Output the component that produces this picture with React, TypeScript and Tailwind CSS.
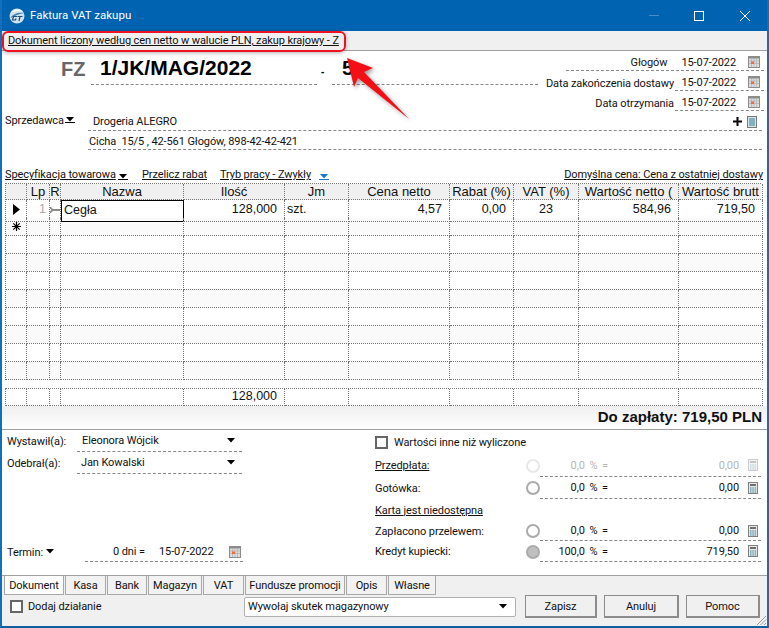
import { ReactNode } from "react";

const COLS = [21, 23, 11, 123, 101, 64, 101, 64, 65, 100, 84];
const HEADERS = ["", "Lp", "R", "Nazwa", "Ilość", "Jm", "Cena netto", "Rabat (%)", "VAT (%)", "Wartość netto (", "Wartość brutt"];
const EMPTY_ROWS = [1, 2, 3, 4, 5, 6, 7, 8, 9];

const tahoma = "whitespace-nowrap font-['Roboto',sans-serif] text-[11px] leading-none tracking-[-0.1px] text-[#111]";
const gridCols = "grid grid-cols-[21px_23px_11px_123px_101px_64px_101px_64px_65px_100px_84px]";

function DownArrow({ color = "#000", line = false }: { color?: string; line?: boolean }) {
  return (
    <svg width="10" height="6" viewBox="0 0 10 6" className="shrink-0">
      <path d="M1 0h8L5 4.500z" fill={color} />
      {line && <path d="M0 5.500h10" stroke={color} />}
    </svg>
  );
}

function CalendarIcon({ className = "" }: { className?: string }) {
  return (
    <svg width="12" height="12" viewBox="0 0 12 12" className={`shrink-0 ${className}`}>
      <rect width="12" height="12" fill="#8c8c8c" />
      <rect x="1" y="2.500" width="10" height="8.500" fill="#dcdcdc" />
      <path d="M1 5h10M1 7.500h10M3.500 2.500v8.500M6 2.500v8.500M8.500 2.500v8.500" stroke="#b4b4b4" strokeWidth="0.8" />
      <rect x="3" y="5.500" width="3" height="2.500" fill="#e8703a" />
    </svg>
  );
}

function CalcIcon({ faded = false }: { faded?: boolean }) {
  return (
    <svg width="10" height="12" viewBox="0 0 10 12" className={`shrink-0 ${faded ? "opacity-40" : ""}`}>
      <rect x="0.5" y="0.5" width="9" height="11" fill="#e8e8e8" stroke="#808080" />
      <rect x="2" y="2" width="6" height="2" fill="#6e6e6e" />
      <path d="M2 6h1.500M4.300 6h1.500M6.600 6h1.500M2 8h1.500M4.300 8h1.500M6.600 8h1.500M2 10h1.500M4.300 10h1.500M6.600 10h1.500" stroke="#2f7f97" />
    </svg>
  );
}

function Radio({ filled = false, faded = false }: { filled?: boolean; faded?: boolean }) {
  return (
    <span
      className={`h-[14px] w-[14px] shrink-0 rounded-full border-2 ${
        faded ? "border-[#e8e8e8]" : "border-[#ababab]"
      } ${filled ? "bg-[#c0c0c0]" : "bg-white"}`}
    />
  );
}

function Checkbox() {
  return <span className="h-[13px] w-[13px] shrink-0 border-2 border-[#666] bg-white" />;
}

function DateRow({ label, inside = false }: { label: string; inside?: boolean }) {
  if (inside) {
    return (
      <div className="flex h-[20px] justify-end">
        <div className="flex h-[20px] w-[198px] items-end justify-end border-b border-dashed border-[#888] pb-[2px] pr-[4px]">
          <span className={`${tahoma} mr-[14px]`}>{label}</span>
          <span className={`${tahoma} mr-[12px]`}>15-07-2022</span>
          <CalendarIcon />
        </div>
      </div>
    );
  }
  return (
    <div className="flex h-[20px] justify-end">
      <span className={`${tahoma} mr-[1px] mt-[7px]`}>{label}</span>
      <div className="flex h-[20px] w-[89px] items-end justify-end border-b border-dashed border-[#888] pb-[2px] pr-[4px]">
        <span className={`${tahoma} mr-[12px]`}>15-07-2022</span>
        <CalendarIcon />
      </div>
    </div>
  );
}

function Cell({ children, align = "left", header = false }: { children?: ReactNode; align?: string; header?: boolean }) {
  return (
    <div
      className={`flex overflow-hidden whitespace-nowrap border-r border-b border-dotted border-[#777] font-['Liberation_Sans',sans-serif] text-[#111] ${
        header ? "items-center text-[13px]" : "items-center pb-[2px] text-[12.5px]"
      } ${align === "right" ? "justify-end pr-[7px]" : align === "center" ? "justify-center" : "pl-[2px]"}`}
    >
      {children}
    </div>
  );
}

function PayRow({
  label,
  pct,
  amount,
  h,
  faded = false,
  filled = false,
  underline = false,
}: {
  label: string;
  pct: string;
  amount: string;
  h: string;
  faded?: boolean;
  filled?: boolean;
  underline?: boolean;
}) {
  const color = faded ? "text-[#b5b5b5]" : "";
  return (
    <div className={`flex items-center ${h}`}>
      <span className={`${tahoma} w-[151px] ${underline ? "underline" : ""}`}>{label}</span>
      <Radio filled={filled} faded={faded} />
      <div className="flex h-full w-[221px] items-center border-b border-dashed border-[#888] pl-[1px] pr-[3px]">
        <span className={`${tahoma} ${color} w-[67px] text-right [word-spacing:2px]`}>{pct}</span>
        <span className={`${tahoma} ${color} flex-1 text-right`}>{amount}</span>
        <span className="ml-[9px]">
          <CalcIcon faded={faded} />
        </span>
      </div>
    </div>
  );
}

function Tab({ label, w, active = false }: { label: string; w: string; active?: boolean }) {
  return (
    <div
      className={`flex h-[19px] items-center justify-center border border-t-0 border-[#a8a8a8] ${tahoma} ${w} ${
        active ? "bg-white" : "bg-[#f2f2f2]"
      }`}
    >
      {label}
    </div>
  );
}

function Button({ label, w }: { label: string; w: string }) {
  return (
    <button
      className={`${tahoma} flex h-[23px] ${w} items-center justify-center border border-[#8c8c8c] border-b-2 border-r-2 bg-[#f0f0f0]`}
    >
      {label}
    </button>
  );
}

export default function App() {
  return (
    <div className="relative flex h-[628px] w-[769px] flex-col overflow-hidden border-x-2 border-b-2 border-x-[#1070bd] border-b-[#0f5f9f] bg-white">
      {/* title bar */}
      <div className="-mx-[2px] flex h-[31px] shrink-0 items-center bg-[#0063b1] pl-[9px]">
        <svg width="16" height="16" viewBox="0 0 16 16" className="shrink-0">
          <circle cx="8" cy="8" r="7.500" fill="#cfe2ef" />
          <path d="M2 4.500C5 1 11 .500 14 4c-4-1.500-8-1-12 .500z" fill="#fff" />
          <path d="M1 10c3-4 8-6 14-5-4 .500-10 3-14 5z" fill="#3f7fae" />
          <path d="M8 8.500H4.500L3.500 12h3l.500-1.500M8.500 8.500h5M11 8.500l-1 4.500" stroke="#1d4d74" strokeWidth="1.2" fill="none" />
        </svg>
        <span className="ml-[5px] font-['Roboto',sans-serif] text-[11.5px] text-white">Faktura VAT zakupu</span>
        <div className="ml-auto mr-[19px] flex items-center">
          <svg width="10" height="1" className="mr-[35px]">
            <rect width="10" height="1" fill="#4a8cc4" />
          </svg>
          <svg width="10" height="10" className="mr-[36px]">
            <rect x="0.5" y="0.5" width="9" height="9" fill="none" stroke="#fff" />
          </svg>
          <svg width="10" height="10">
            <path d="M0 0l10 10M10 0L0 10" stroke="#fff" />
          </svg>
        </div>
      </div>

      {/* info bar */}
      <div className="flex h-[20px] shrink-0 items-center border-b border-[#a0a0a0] bg-[#f0f0f0] pl-[6px]">
        <span className={`${tahoma} underline`}>Dokument liczony według cen netto w walucie PLN, zakup krajowy - Z</span>
      </div>

      {/* document number + dates */}
      <div className="flex h-[60px] shrink-0 items-start">
        <div className="flex h-[34px] items-end font-['Liberation_Sans',sans-serif] font-bold">
          <span className="mb-[6px] w-[89px] pl-[59px] text-[20px] leading-none text-[#666]">FZ</span>
          <div className="h-[34px] w-[226px] border-b border-dashed border-[#888] pl-[9px] pt-[6px] text-[21px] leading-none text-black">
            1/JK/MAG/2022
          </div>
          <span className="mb-[8px] w-[15px] pl-[4px] text-[10px] leading-none">-</span>
          <div className="h-[34px] w-[206px] border-b border-dashed border-[#888] pl-[10px] pt-[6px] text-[21px] leading-none text-black">
            5
          </div>
        </div>
        <div className="ml-auto mr-[3px] flex flex-col">
          <DateRow label="Głogów" inside />
          <DateRow label="Data zakończenia dostawy" />
          <DateRow label="Data otrzymania" />
        </div>
      </div>

      {/* seller */}
      <div className="flex h-[20px] shrink-0 items-center">
        <div className="flex w-[86px] items-center pb-[2px] pl-[3px]">
          <span className={`${tahoma} mr-[1px]`}>Sprzedawca</span>
          <DownArrow line />
        </div>
        <div className="mr-[5px] flex h-full flex-1 items-center border-b border-dashed border-[#888] pl-[5px] pr-[5px] pt-[2px]">
          <span className={tahoma}>Drogeria ALEGRO</span>
          <svg width="9" height="9" viewBox="0 0 9 9" className="ml-auto mr-[5px]">
            <path d="M4.500 0v9M0 4.500h9" stroke="#000" strokeWidth="2" />
          </svg>
          <svg width="10" height="12" viewBox="0 0 10 12">
            <rect x="0.5" y="0.5" width="9" height="11" fill="#d8e6ea" stroke="#777" />
            <path d="M2 3h6M2 5h6M2 7h6M2 9h6" stroke="#2b7d95" />
          </svg>
        </div>
      </div>
      <div className="ml-[86px] mr-[5px] flex h-[19px] shrink-0 items-center border-b border-dashed border-[#888] pl-[1px] pt-[2px]">
        <span className={tahoma}>Cicha&nbsp; 15/5 , 42-561 Głogów, 898-42-42-421</span>
      </div>

      {/* spec links */}
      <div className="flex h-[33px] shrink-0 items-end pb-[3px] pl-[3px] pr-[4px]">
        <span className={`${tahoma} w-[113px] underline`}>Specyfikacja towarowa</span>
        <DownArrow line />
        <span className={`${tahoma} ml-[14px] w-[78px] underline`}>Przelicz rabat</span>
        <span className={`${tahoma} w-[99px] text-[#1a78c8] underline`}>Tryb pracy - Zwykły</span>
        <DownArrow color="#1a78c8" line />
        <span className={`${tahoma} ml-auto underline`}>Domyślna cena: Cena z ostatniej dostawy</span>
      </div>

      {/* table */}
      <div className="ml-[3px] w-[756px] shrink-0 border-l border-t border-dotted border-[#777]">
        <div className={`${gridCols} h-[16px] bg-[#f0f0f0]`}>
          {HEADERS.map((h, i) => (
            <Cell key={i} align="center" header>
              {h}
            </Cell>
          ))}
        </div>
        <div className={`${gridCols} h-[18px]`}>
          <Cell align="center">
            <svg width="7" height="11" viewBox="0 0 7 11">
              <path d="M0 0l7 5.500-7 5.500z" fill="#000" />
            </svg>
          </Cell>
          <Cell align="right">
            <span className="mr-[-4px] text-[#aaa]">1</span>
          </Cell>
          <div className="flex items-center border-r border-b border-dotted border-[#777]">
            <svg width="11" height="8" viewBox="0 0 11 8">
              <path d="M0 1l3 3-3 3M3 4h8" stroke="#8a8a8a" strokeWidth="2" fill="none" />
            </svg>
          </div>
          <div className="flex items-center border border-black pb-[1px] pl-[2px] font-['Liberation_Sans',sans-serif] text-[12.5px] text-[#111]">
            Cegła
          </div>
          <Cell align="right">128,000</Cell>
          <Cell>szt.</Cell>
          <Cell align="right">4,57</Cell>
          <Cell align="right">0,00</Cell>
          <Cell align="center">23</Cell>
          <Cell align="right">584,96</Cell>
          <Cell align="right">719,50</Cell>
        </div>
        {EMPTY_ROWS.map((r) => (
          <div key={r} className={`${gridCols} h-[18px] ${r % 2 === 1 ? "bg-[#fafafa]" : "bg-white"}`}>
            {COLS.map((_, i) => (
              <Cell key={i} align="center">
                {r === 1 && i === 0 ? (
                  <svg width="9" height="9" viewBox="0 0 9 9" className="mt-[2px]">
                    <path d="M4.500 0v9M0 4.500h9M1.300 1.300l6.400 6.400M7.700 1.300L1.300 7.700" stroke="#000" strokeWidth="1.2" />
                  </svg>
                ) : null}
              </Cell>
            ))}
          </div>
        ))}
      </div>

      {/* totals */}
      <div className="ml-[3px] mt-[8px] w-[756px] shrink-0 border-l border-t border-dotted border-[#777]">
        <div className={`${gridCols} h-[17px]`}>
          {COLS.map((_, i) => (
            <Cell key={i} align="right">
              {i === 4 ? "128,000" : null}
            </Cell>
          ))}
        </div>
      </div>
      <div className="flex h-[24px] shrink-0 items-center justify-end border-b border-[#a0a0a0] bg-gradient-to-b from-[#efefef] to-white pr-[5px] font-['Liberation_Sans',sans-serif] text-[15px] font-bold text-[#111]">
        Do zapłaty: 719,50 PLN
      </div>

      {/* form */}
      <div className="flex h-[145px] shrink-0">
        <div className="flex w-[373px] flex-col pl-[5px]">
          <div className="flex h-[22px] items-center">
            <span className={`${tahoma} w-[70px]`}>Wystawił(a):</span>
            <div className="flex h-full w-[165px] items-center border-b border-dashed border-[#888] pl-[5px] pr-[6px]">
              <span className={tahoma}>Eleonora Wójcik</span>
              <span className="ml-auto">
                <DownArrow />
              </span>
            </div>
          </div>
          <div className="flex h-[22px] items-center">
            <span className={`${tahoma} w-[70px]`}>Odebrał(a):</span>
            <div className="flex h-full w-[165px] items-center border-b border-dashed border-[#888] pl-[4px] pr-[6px]">
              <span className={tahoma}>Jan Kowalski</span>
              <span className="ml-auto">
                <DownArrow />
              </span>
            </div>
          </div>
          <div className="mb-[13px] mt-auto flex h-[20px] items-center">
            <span className={`${tahoma} w-[38px]`}>Termin:</span>
            <DownArrow />
            <div className="ml-[30px] flex h-full w-[158px] items-center border-b border-dashed border-[#888] pl-[28px]">
              <span className={`${tahoma} w-[46px]`}>0 dni =</span>
              <span className={`${tahoma} w-[70px]`}>15-07-2022</span>
              <CalendarIcon />
            </div>
          </div>
        </div>
        <div className="flex flex-col">
          <div className="flex h-[24px] items-center">
            <Checkbox />
            <span className={`${tahoma} ml-[6px]`}>Wartości inne niż wyliczone</span>
          </div>
          <PayRow label="Przedpłata:" pct="0,0 % =" amount="0,00" h="h-[23px]" faded underline />
          <PayRow label="Gotówka:" pct="0,0 % =" amount="0,00" h="h-[22px]" />
          <div className="flex h-[22px] items-center">
            <span className={`${tahoma} underline`}>Karta jest niedostępna</span>
          </div>
          <PayRow label="Zapłacono przelewem:" pct="0,0 % =" amount="0,00" h="h-[20px]" />
          <PayRow label="Kredyt kupiecki:" pct="100,0 % =" amount="719,50" h="h-[21px]" filled />
        </div>
      </div>

      {/* tabs */}
      <div className="flex min-h-0 flex-1 flex-col border-t border-[#a0a0a0] bg-[#f0f0f0]">
        <div className="flex shrink-0 gap-[1px] pl-[2px]">
          <Tab label="Dokument" w="w-[60px]" active />
          <Tab label="Kasa" w="w-[41px]" />
          <Tab label="Bank" w="w-[40px]" />
          <Tab label="Magazyn" w="w-[54px]" />
          <Tab label="VAT" w="w-[41px]" />
          <Tab label="Fundusze promocji" w="w-[100px]" />
          <Tab label="Opis" w="w-[41px]" />
          <Tab label="Własne" w="w-[48px]" />
        </div>
        <div className="relative flex flex-1 items-center pb-[8px] pl-[8px] pr-[7px]">
          <Checkbox />
          <span className={`${tahoma} ml-[5px] w-[84px]`}>Dodaj działanie</span>
          <div className="ml-[132px] flex h-[20px] w-[272px] items-center rounded-[2px] border border-[#b0b0b0] bg-white pl-[3px] pr-[7px]">
            <span className={tahoma}>Wywołaj skutek magazynowy</span>
            <span className="ml-auto">
              <DownArrow />
            </span>
          </div>
          <div className="ml-[9px] flex gap-[7px]">
            <Button label="Zapisz" w="w-[72px]" />
            <Button label="Anuluj" w="w-[75px]" />
            <Button label="Pomoc" w="w-[74px]" />
          </div>
          <svg width="11" height="11" viewBox="0 0 11 11" className="absolute bottom-0 right-0">
            <path d="M10 1L1 10M10 4.500L4.500 10M10 8L8 10" stroke="#999" />
          </svg>
        </div>
      </div>

      {/* red callout */}
      <div className="absolute left-[0px] top-[31px] h-[21px] w-[344px] rounded-[6px] border-2 border-[#ee1122] shadow-[0_1px_4px_rgba(0,0,0,0.3)]" />
      <svg width="80" height="80" viewBox="0 0 80 80" className="absolute left-[340px] top-[50px] drop-shadow-[2px_2px_2px_rgba(0,0,0,0.4)]">
        <path d="M5 8L31 18L22 22L67 69L16 28L12 37z" fill="#f40f15" />
      </svg>
    </div>
  );
}
